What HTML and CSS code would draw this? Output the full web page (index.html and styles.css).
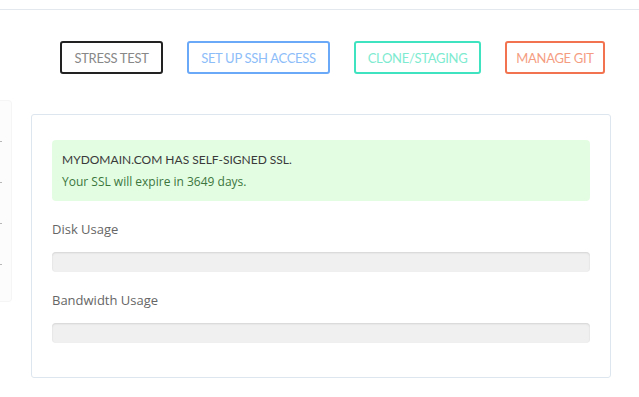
FILE: index.html
```html
<!DOCTYPE html>
<html lang="en">
<head>
    <meta charset="UTF-8">
    <title>Site Tools</title>
    <link rel="stylesheet" href="styles.css">
</head>
<body>

    <header class="topbar"></header>

    <div class="toolbar">
        <button class="tool-btn btn-dark">STRESS TEST</button>
        <button class="tool-btn btn-blue">SET UP SSH ACCESS</button>
        <button class="tool-btn btn-teal">CLONE/STAGING</button>
        <button class="tool-btn btn-orange">MANAGE GIT</button>
    </div>

    <div class="main">
        <div class="sidebar">
            <span class="tick"></span>
            <span class="tick"></span>
            <span class="tick"></span>
            <span class="tick"></span>
        </div>

        <div class="card">
            <div class="ssl-alert">
                <div class="ssl-title">MYDOMAIN.COM HAS SELF-SIGNED SSL.</div>
                <div class="ssl-note">Your SSL will expire in 3649 days.</div>
            </div>

            <div class="usage-label">Disk Usage</div>
            <div class="progress"><div class="progress-bar" style="width: 0%"></div></div>

            <div class="usage-label">Bandwidth Usage</div>
            <div class="progress"><div class="progress-bar" style="width: 0%"></div></div>
        </div>
    </div>

</body>
</html>
```

FILE: styles.css
```css
body {
    font-family: 'Open Sans', 'Liberation Sans', sans-serif;
    margin: 0;
    padding: 0;
    background-color: #ffffff;
    width: 639px;
}

.topbar {
    height: 9px;
    border-bottom: 1px solid #e3e8ee;
}

.toolbar {
    display: flex;
    justify-content: flex-end;
    gap: 24px;
    padding: 31px 34px 0 0;
    height: 33px;
}

.tool-btn {
    font-family: 'Lato', 'Liberation Sans', sans-serif;
    font-size: 13px;
    letter-spacing: -0.3px;
    background: #ffffff;
    border: 2px solid;
    border-radius: 3px;
    height: 33px;
    padding: 0;
    cursor: pointer;
}

.btn-dark {
    width: 103px;
    border-color: #222222;
    color: #888888;
}

.btn-blue {
    width: 143px;
    border-color: #6aa8f8;
    color: #8dbdf9;
}

.btn-teal {
    width: 127px;
    border-color: #40e3bf;
    color: #7eebd0;
}

.btn-orange {
    width: 100px;
    border-color: #f27350;
    color: #f59d82;
}

.main {
    display: flex;
    margin-top: 26px;
}

.sidebar {
    width: 12px;
    height: 202px;
    background-color: #fcfcfc;
    border: 1px solid #f5f5f5;
    border-left: none;
    border-radius: 0 4px 4px 0;
    display: flex;
    flex-direction: column;
    gap: 40px;
    padding-top: 40px;
    box-sizing: border-box;
}

.tick {
    display: block;
    width: 2px;
    height: 1px;
    background-color: #b8b8b8;
}

.card {
    width: 538px;
    margin: 14px 0 0 19px;
    padding: 25px 20px 34px 20px;
    border: 1px solid #dde6ee;
    border-radius: 3px;
}

.ssl-alert {
    background-color: #e3fde3;
    border-radius: 4px;
    padding: 9px 10px 8px 10px;
    line-height: 22px;
}

.ssl-title {
    font-family: 'Lato', 'Liberation Sans', sans-serif;
    font-size: 12px;
    color: #3a3a3a;
    letter-spacing: 0;
}

.ssl-note {
    font-size: 12px;
    color: #3c763d;
}

.usage-label {
    font-size: 13px;
    line-height: 20px;
    color: #666666;
    margin: 18px 0 13px 0;
}

.progress {
    height: 20px;
    background-color: #f0f0f0;
    border-radius: 4px;
    box-shadow: inset 0 1px 2px rgba(0, 0, 0, 0.12);
    overflow: hidden;
}

.progress-bar {
    height: 100%;
    background-color: #5cb85c;
}
```
